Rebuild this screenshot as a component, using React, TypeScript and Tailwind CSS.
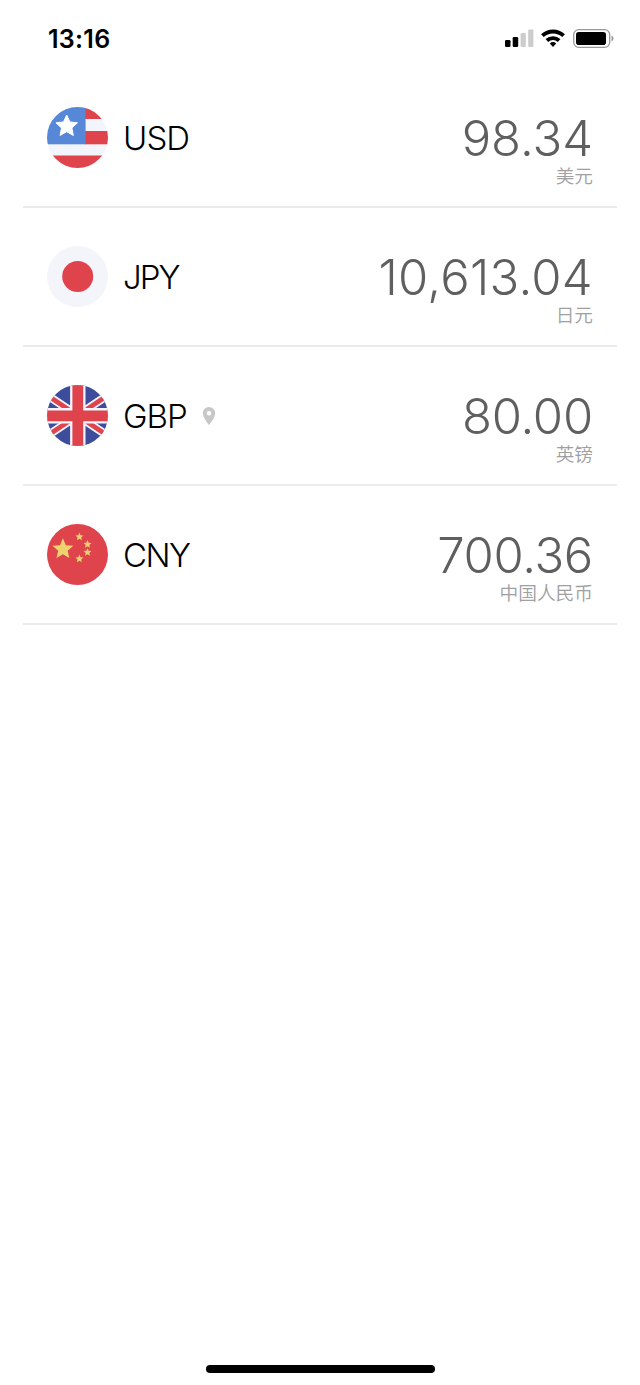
import type { ReactNode } from "react";

const star = (cx: number, cy: number, r: number, inner = 0.45) =>
  Array.from({ length: 10 }, (_, i) => {
    const a = (Math.PI / 5) * i - Math.PI / 2;
    const d = i % 2 ? r * inner : r;
    return `${(cx + d * Math.cos(a)).toFixed(2)},${(cy + d * Math.sin(a)).toFixed(2)}`;
  }).join(" ");

function Flag({ id, children }: { id: string; children: ReactNode }) {
  return (
    <svg viewBox="0 0 61 61" className="size-[61px] shrink-0">
      <clipPath id={id}>
        <circle cx="30.5" cy="30.5" r="30.5" />
      </clipPath>
      <g clipPath={`url(#${id})`}>{children}</g>
    </svg>
  );
}

const UsFlag = () => (
  <Flag id="us">
    <rect width="61" height="61" fill="#f3f5fc" />
    <g fill="#df444d">
      <rect x="38" width="23" height="12" />
      <rect x="38" y="24" width="23" height="13.3" />
      <rect y="48.5" width="61" height="12.5" />
    </g>
    <rect width="38.6" height="37.3" fill="#5788d8" />
    <polygon points={star(19.7, 19.3, 11.3, 0.48)} fill="#fff" stroke="#fff" strokeWidth="1" strokeLinejoin="round" />
  </Flag>
);

const JpFlag = () => (
  <Flag id="jp">
    <rect width="61" height="61" fill="#f3f5fb" />
    <circle cx="30.7" cy="30.5" r="15.5" fill="#df444d" />
  </Flag>
);

const GbFlag = () => (
  <Flag id="gb">
    <rect width="61" height="61" fill="#3e4c9c" />
    <path d="M-6 6 67 55M67 6-6 55" stroke="#f3f5fc" strokeWidth="8.2" />
    <path d="M-6 6 67 55M67 6-6 55" stroke="#df444d" strokeWidth="4.8" />
    <path d="M30.8 0V61M0 30.8H61" stroke="#f3f5fc" strokeWidth="15.4" />
    <path d="M30.8 0V61M0 30.8H61" stroke="#df444d" strokeWidth="10.8" />
  </Flag>
);

const CnFlag = () => (
  <Flag id="cn">
    <rect width="61" height="61" fill="#df444d" />
    <g fill="#efd270">
      <polygon points={star(15.9, 25.2, 11)} />
      <polygon points={star(32.4, 12.8, 4.2)} />
      <polygon points={star(40.5, 20.3, 4.2)} />
      <polygon points={star(40.5, 28.4, 4.2)} />
      <polygon points={star(32.4, 34.8, 4.2)} />
    </g>
  </Flag>
);

// tracking is tuned per code / amount
const rows = [
  { code: "USD", name: "美元", amount: "98.34", flag: <UsFlag />, codeClass: "tracking-[-0.9px]", amountClass: "tracking-normal" },
  { code: "JPY", name: "日元", amount: "10,613.04", flag: <JpFlag />, codeClass: "tracking-[-2px]", amountClass: "tracking-[0.3px]" },
  { code: "GBP", name: "英镑", amount: "80.00", flag: <GbFlag />, codeClass: "tracking-[-1px]", amountClass: "tracking-[-0.2px]", local: true },
  { code: "CNY", name: "中国人民币", amount: "700.36", flag: <CnFlag />, codeClass: "tracking-[-1.5px]", amountClass: "tracking-[-0.3px]" },
];

function StatusBar() {
  return (
    <header className="flex h-[69px] items-start justify-between pt-6 pr-[26px] pl-12">
      <span className="text-[25px] leading-[30px] font-semibold tracking-[0.3px]">13:16</span>
      <div className="flex pt-[5px]">
        <svg viewBox="0 0 110 20" className="h-5 w-[110px]">
          <rect x="1" y="11" width="5.5" height="7" rx="1.3" />
          <rect x="8.7" y="8" width="5.5" height="10" rx="1.3" />
          <rect x="16.6" y="4" width="5.2" height="14" rx="1.2" fill="#ccc" />
          <rect x="24.2" y="0.5" width="5.2" height="17.5" rx="1.2" fill="#ccc" />
          <g fill="none" stroke="#000" strokeWidth="3.9">
            <path d="M38.4 6.6a15.6 15.6 0 0 1 21.2 0" />
            <path d="M42.9 11.5a9 9 0 0 1 12.2 0" />
          </g>
          <path d="M49 18l-3.2-3.4a4.7 4.7 0 0 1 6.4 0z" />
          <rect x="69.7" y="0.7" width="36" height="17.6" rx="5" fill="none" stroke="#999" strokeWidth="1.3" />
          <rect x="72" y="3" width="30" height="13" rx="2.8" />
          <path d="M107.5 6.6q2 .8 2 2.9t-2 2.9z" fill="#999" />
        </svg>
      </div>
    </header>
  );
}

export default function App() {
  return (
    <div className="flex h-[1385px] w-[640px] flex-col bg-white font-['Inter','Noto_Sans_CJK_SC',sans-serif] text-black">
      <StatusBar />
      <main className="flex-1 px-[23px]">
        {rows.map((row) => (
          <div key={row.code} className="flex h-[139px] items-center border-b-2 border-[#ebebeb] px-6">
            {row.flag}
            <span className={`ml-[15px] text-[33px] leading-10 font-light ${row.codeClass}`}>{row.code}</span>
            {row.local && (
              <svg viewBox="0 0 14 20" className="ml-[15px] h-5 w-3.5">
                <path fillRule="evenodd" fill="#c7c7c7" d="M7 1a6.2 6.2 0 0 0-6.2 6.2C.8 11.6 7 19 7 19s6.2-7.4 6.2-11.8A6.2 6.2 0 0 0 7 1zm0 3.9a2.3 2.3 0 1 1 0 4.6 2.3 2.3 0 0 1 0-4.6z" />
              </svg>
            )}
            <div className="ml-auto flex flex-col items-end pt-[27px]">
              <span className={`text-[49px] leading-[52px] font-light text-[#5f5f5f] ${row.amountClass}`}>{row.amount}</span>
              <span className="text-[18.7px] leading-6 font-[350] text-[#a0a0a0]">{row.name}</span>
            </div>
          </div>
        ))}
      </main>
      <footer className="flex justify-center pb-3">
        <div className="h-2 w-[229px] rounded-full bg-black" />
      </footer>
    </div>
  );
}
